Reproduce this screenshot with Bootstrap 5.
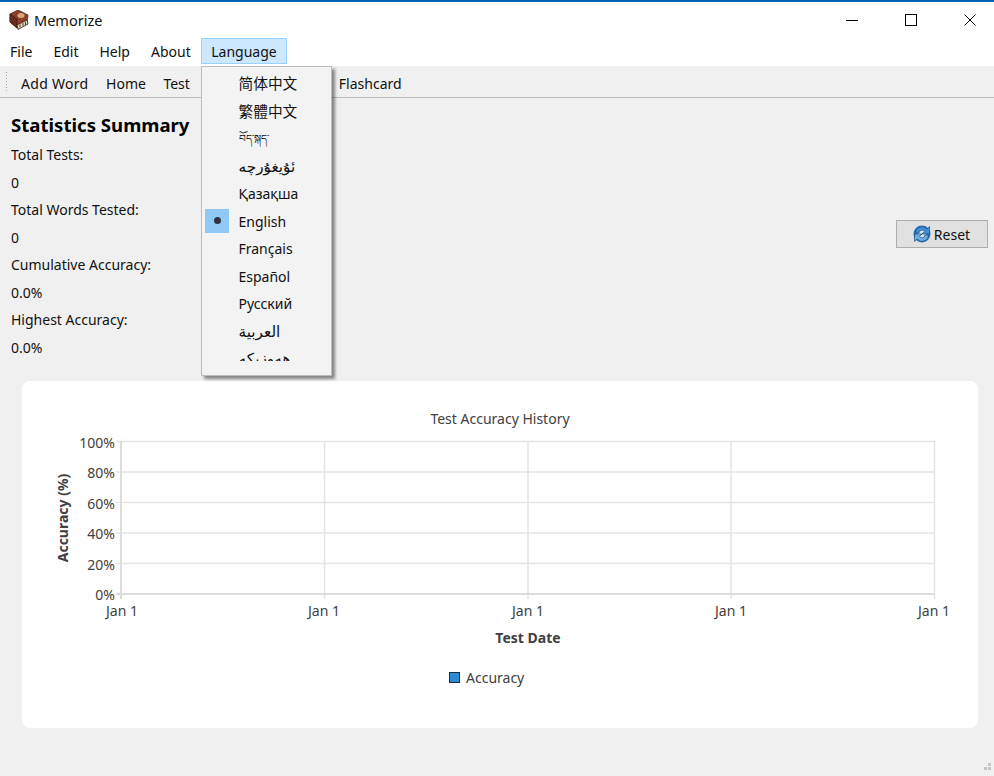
<!DOCTYPE html>
<html lang="en">
<head>
<meta charset="utf-8">
<title>Memorize</title>
<link href="https://cdn.jsdelivr.net/npm/bootstrap@5.3.0/dist/css/bootstrap.min.css" rel="stylesheet">
<style>
html,body{height:100%;margin:0;overflow:hidden}
body{font-family:"Noto Sans","Liberation Sans","Noto Sans CJK SC",sans-serif;font-size:14px;color:#111;background:#f0f0f0}
.app-win{width:994px;height:776px;display:flex;flex-direction:column;position:relative;border-top:2px solid #0063b1;background:#f0f0f0}
.app-title{height:36px;background:#fff;padding-left:9px;gap:5px}
.app-name{font-size:14.5px;line-height:20px}
.win-ctrls{margin-left:auto}
.win-ctrl{width:59px;height:36px;display:flex;align-items:center;justify-content:center}
.win-ctrl:last-child{width:48px;margin-left:5.5px}
.app-menubar{height:28px;background:#fff}
.menu-top{height:26px;line-height:26px;padding:0 9.5px;border:1px solid transparent;white-space:nowrap}
.menu-top:first-child{margin-left:-.5px}
.menu-open{background:#cce8ff;border-color:#99d1ff;padding:0 9px}
.app-toolbar{height:32px;border-bottom:1px solid #bdbdbd;padding:4px 0 0 5px;background:#f0f0f0}
.tb-grip{width:3px;height:22px;margin:-4px 13px 0 0;background-image:radial-gradient(#a8a8a8 0.8px,transparent 1px);background-size:3px 3px}
.tb-item{margin-right:17.5px;white-space:nowrap}
.tb-wide{letter-spacing:.3px}
.tb-gap{width:114px;overflow:hidden;visibility:hidden}
.stats-wrap{padding:13px 6px 0 11px}
.stats-title{font-size:18.6px;font-weight:700;line-height:27px;margin:0 0 3px;color:#000}
.stats-line{height:27.5px;line-height:27.5px}
.reset-btn{width:92px;height:28px;margin-bottom:4px;background:#e1e1e1;border:1px solid #adadad;display:flex;align-items:center;justify-content:center;gap:2px;padding:0 2px 0 0;font-size:14px;color:#111;border-radius:0}
.chart-panel{margin:20px 16px 0 22px;height:347px;background:#fff;border-radius:8px}
.chart-svg{display:block}
.chart-svg text{font-family:"Noto Sans","Liberation Sans",sans-serif;fill:#404040}
.size-grip{position:absolute;right:2px;bottom:2px}
.lang-menu{position:absolute;left:201px;top:64px;width:131px;height:310px;background:#f2f3f2;border:1px solid #bcbcbc;box-shadow:3px 3px 3px rgba(0,0,0,.45);overflow:hidden;z-index:5;padding-top:3px;color:#111}
.lang-item{height:27.5px;line-height:27.5px;padding-left:36.5px;white-space:nowrap;position:relative}
.lang-cjk{font-family:"Noto Sans CJK SC",sans-serif;font-size:14.7px;line-height:25.5px}
.lang-bo{font-size:10.5px}
.lang-ar{font-family:"DejaVu Sans","Noto Sans",sans-serif;font-size:15.3px;line-height:29.5px}
.lang-cut{height:16px;overflow:hidden}
.lang-check{position:absolute;left:3px;top:1px;width:24px;height:24px;background:#90c8f6;display:flex;align-items:center;justify-content:center}
.lang-dot{width:7px;height:7px;border-radius:50%;background:#333044}
</style>
</head>
<body>
<div class="app-win">
  <div class="app-title d-flex align-items-center">
    <svg width="20" height="20" viewBox="0 0 20 20" aria-hidden="true">
      <path d="M1 4 9 0l10 5-1 8-10 5-7-6z" fill="#8d3f2c" stroke="#3a1a12" stroke-width=".7"/>
      <path d="M1 4l7 5v9l-7-6z" fill="#6b2a1c" stroke="#3a1a12" stroke-width=".7"/>
      <ellipse cx="12" cy="5.500" rx="3.500" ry="2.500" fill="#d9a878"/>
      <path d="M8 15l10-5 1 4-10 5.500z" fill="#e8d8b8" stroke="#2a1a10" stroke-width=".8"/>
      <path d="M11 14.500v3M14 13v3M16.500 12v3" stroke="#2a1a10" stroke-width=".8"/>
    </svg>
    <span class="app-name">Memorize</span>
    <div class="win-ctrls d-flex">
      <div class="win-ctrl"><svg width="12" height="12" viewBox="0 0 12 12"><path d="M0 6.500h12" stroke="#000"/></svg></div>
      <div class="win-ctrl"><svg width="12" height="12" viewBox="0 0 12 12"><rect x=".5" y=".5" width="11" height="11" fill="none" stroke="#000"/></svg></div>
      <div class="win-ctrl"><svg width="12" height="12" viewBox="0 0 12 12"><path d="M.5.5l11 11M11.500.5l-11 11" stroke="#000"/></svg></div>
    </div>
  </div>
  <div class="app-menubar d-flex">
    <div class="menu-top">File</div>
    <div class="menu-top">Edit</div>
    <div class="menu-top">Help</div>
    <div class="menu-top">About</div>
    <div class="menu-top menu-open">Language</div>
  </div>
  <div class="app-toolbar d-flex align-items-center">
    <div class="tb-grip"></div>
    <div class="tb-item tb-wide">Add Word</div>
    <div class="tb-item">Home</div>
    <div class="tb-item">Test</div>
    <div class="tb-item tb-gap">Statistics</div>
    <div class="tb-item">Flashcard</div>
  </div>
  <div class="stats-wrap d-flex justify-content-between align-items-center">
    <div>
      <h1 class="stats-title">Statistics Summary</h1>
      <div class="stats-line">Total Tests:</div>
      <div class="stats-line">0</div>
      <div class="stats-line">Total Words Tested:</div>
      <div class="stats-line">0</div>
      <div class="stats-line">Cumulative Accuracy:</div>
      <div class="stats-line">0.0%</div>
      <div class="stats-line">Highest Accuracy:</div>
      <div class="stats-line">0.0%</div>
    </div>
    <button type="button" class="reset-btn">
      <svg width="20" height="20" viewBox="0 0 20 20" aria-hidden="true">
        <circle cx="10" cy="10" r="6.500" fill="none" stroke="#2a70b8" stroke-width="4"/>
        <path d="M3.500 9A6.500 6.500 0 0 1 15 5l2.500-2.500V10H10l2.500-2.500A3 3 0 0 0 7 9z" fill="#3f8fd8" stroke="#1b4f86" stroke-width=".7"/>
        <path d="M16.500 11A6.500 6.500 0 0 1 5 15l-2.500 2.500V10H10l-2.500 2.500A3 3 0 0 0 13 11z" fill="#6ab0e6" stroke="#1b4f86" stroke-width=".7"/>
      </svg>
      <span>Reset</span>
    </button>
  </div>
  <div class="chart-panel">
    <svg class="chart-svg" width="956" height="347" viewBox="22 381 956 347" role="img" aria-label="Test Accuracy History">
      <g stroke="#e4e4e4" stroke-width="1.500" fill="none">
        <path d="M116 441.500H935M116 472H935M116 502.500H935M116 533H935M116 563.500H935"/>
        <path d="M324.500 441V599M528 441V599M731 441V599M934.500 441V599"/>
      </g>
      <path d="M121 441V599M116 594H935" stroke="#dcdcdc" stroke-width="2" fill="none"/>
      <text x="500" y="424" font-size="14" text-anchor="middle">Test Accuracy History</text>
      <g font-size="14" text-anchor="end">
        <text x="115" y="448">100%</text><text x="115" y="478">80%</text><text x="115" y="509">60%</text><text x="115" y="539">40%</text><text x="115" y="570">20%</text><text x="115" y="600">0%</text>
      </g>
      <g font-size="14" text-anchor="middle">
        <text x="122" y="616">Jan 1</text><text x="324" y="616">Jan 1</text><text x="528" y="616">Jan 1</text><text x="731" y="616">Jan 1</text><text x="934" y="616">Jan 1</text>
      </g>
      <text x="528" y="643" font-size="14" font-weight="700" text-anchor="middle">Test Date</text>
      <text transform="translate(68 518) rotate(-90)" font-size="14" font-weight="700" text-anchor="middle">Accuracy (%)</text>
      <rect x="449.500" y="672.500" width="10" height="10" fill="#2d8bd8" stroke="#1c2b3a"/>
      <text x="466" y="683" font-size="14">Accuracy</text>
    </svg>
  </div>
  <svg class="size-grip" width="12" height="12" viewBox="0 0 12 12" aria-hidden="true"><path d="M8 0h3v3H8zM4 4h3v3H4zM8 4h3v3H8z" transform="translate(0 1)" fill="#c4c4c4"/></svg>
  <div class="lang-menu">
    <div class="lang-item lang-cjk">简体中文</div>
    <div class="lang-item lang-cjk">繁體中文</div>
    <div class="lang-item lang-bo">བོད་སྐད་</div>
    <div class="lang-item lang-ar">ئۇيغۇرچە</div>
    <div class="lang-item">Қазақша</div>
    <div class="lang-item"><span class="lang-check"><span class="lang-dot"></span></span>English</div>
    <div class="lang-item">Français</div>
    <div class="lang-item">Español</div>
    <div class="lang-item">Русский</div>
    <div class="lang-item lang-ar">العربية</div>
    <div class="lang-item lang-ar lang-cut">ھەوزىكە</div>
  </div>
</div>
<script src="https://cdn.jsdelivr.net/npm/bootstrap@5.3.0/dist/js/bootstrap.bundle.min.js"></script>
</body>
</html>
